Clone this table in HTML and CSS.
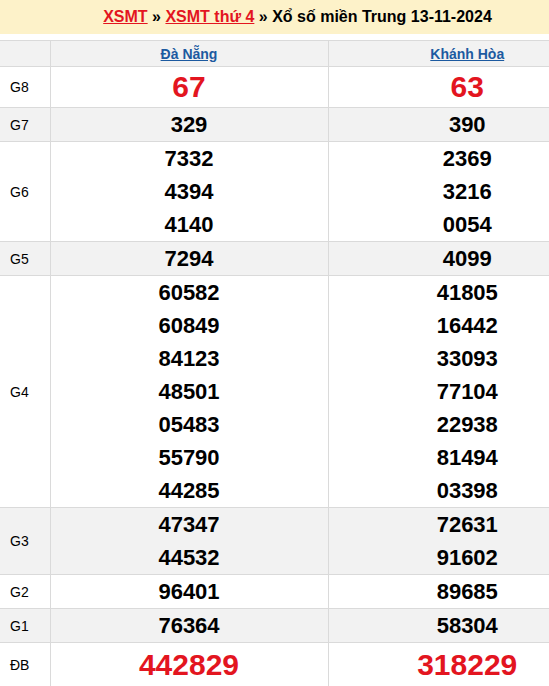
FILE: index.html
```html
<!DOCTYPE html>
<html lang="vi">
<head>
<meta charset="utf-8">
<title>XSMT 13-11-2024</title>
<link rel="stylesheet" href="styles.css">
</head>
<body>
<div class="page">
  <div class="title-bar">
    <a href="#" class="crumb">XSMT</a> » <a href="#" class="crumb">XSMT thứ 4</a> » Xổ số miền Trung 13-11-2024
  </div>
  <table class="results">
    <colgroup><col class="c-label"><col class="c-prov"><col class="c-prov2"></colgroup>
    <thead>
      <tr class="head">
        <th></th>
        <th><a href="#" class="prov">Đà Nẵng</a></th>
        <th><a href="#" class="prov">Khánh Hòa</a></th>
      </tr>
    </thead>
    <tbody>
      <tr class="g8">
        <td class="lbl">G8</td>
        <td class="nums big"><div>67</div></td>
        <td class="nums big"><div>63</div></td>
      </tr>
      <tr class="alt">
        <td class="lbl">G7</td>
        <td class="nums"><div>329</div></td>
        <td class="nums"><div>390</div></td>
      </tr>
      <tr>
        <td class="lbl">G6</td>
        <td class="nums"><div>7332</div><div>4394</div><div>4140</div></td>
        <td class="nums"><div>2369</div><div>3216</div><div>0054</div></td>
      </tr>
      <tr class="alt">
        <td class="lbl">G5</td>
        <td class="nums"><div>7294</div></td>
        <td class="nums"><div>4099</div></td>
      </tr>
      <tr>
        <td class="lbl">G4</td>
        <td class="nums"><div>60582</div><div>60849</div><div>84123</div><div>48501</div><div>05483</div><div>55790</div><div>44285</div></td>
        <td class="nums"><div>41805</div><div>16442</div><div>33093</div><div>77104</div><div>22938</div><div>81494</div><div>03398</div></td>
      </tr>
      <tr class="alt">
        <td class="lbl">G3</td>
        <td class="nums"><div>47347</div><div>44532</div></td>
        <td class="nums"><div>72631</div><div>91602</div></td>
      </tr>
      <tr>
        <td class="lbl">G2</td>
        <td class="nums"><div>96401</div></td>
        <td class="nums"><div>89685</div></td>
      </tr>
      <tr class="alt">
        <td class="lbl">G1</td>
        <td class="nums"><div>76364</div></td>
        <td class="nums"><div>58304</div></td>
      </tr>
      <tr class="db">
        <td class="lbl">ĐB</td>
        <td class="nums big"><div>442829</div></td>
        <td class="nums big"><div>318229</div></td>
      </tr>
    </tbody>
  </table>
</div>
</body>
</html>
```

FILE: styles.css
```css
html, body {
  margin: 0;
  padding: 0;
  background: #fff;
}
body {
  font-family: "Liberation Sans", Arial, sans-serif;
  color: #000;
}
.page {
  width: 549px;
}
.title-bar {
  height: 34px;
  line-height: 34px;
  background: #fdf2c9;
  text-align: center;
  padding-left: 46px;
  font-size: 16px;
  font-weight: bold;
  margin-bottom: 6px;
}
.crumb {
  color: #e3151f;
  text-decoration: underline;
}
.results {
  width: 100%;
  border-collapse: collapse;
  table-layout: fixed;
}
.c-label { width: 50px; }
.c-prov { width: 278px; }
.results th,
.results td {
  border: 1px solid #dadada;
  padding: 0;
}
.results tr > :first-child { border-left: none; }
.results tr > :last-child {
  border-right: none;
  padding-left: 57px;
}
.head th {
  background: #f2f2f2;
  height: 25px;
  font-size: 14px;
  font-weight: bold;
  text-align: center;
}
.prov {
  color: #1c5aa0;
  text-decoration: underline;
}
.alt td { background: #f2f2f2; }
.lbl {
  font-size: 14px;
  padding-left: 10px !important;
  text-align: left;
}
.nums {
  text-align: center;
  font-size: 22px;
  font-weight: bold;
}
.nums div {
  line-height: 33px;
}
.nums.big {
  color: #e3151f;
  font-size: 30px;
}
.g8 .nums.big div { line-height: 40px; }
.db .nums.big div { line-height: 44px; }
```
